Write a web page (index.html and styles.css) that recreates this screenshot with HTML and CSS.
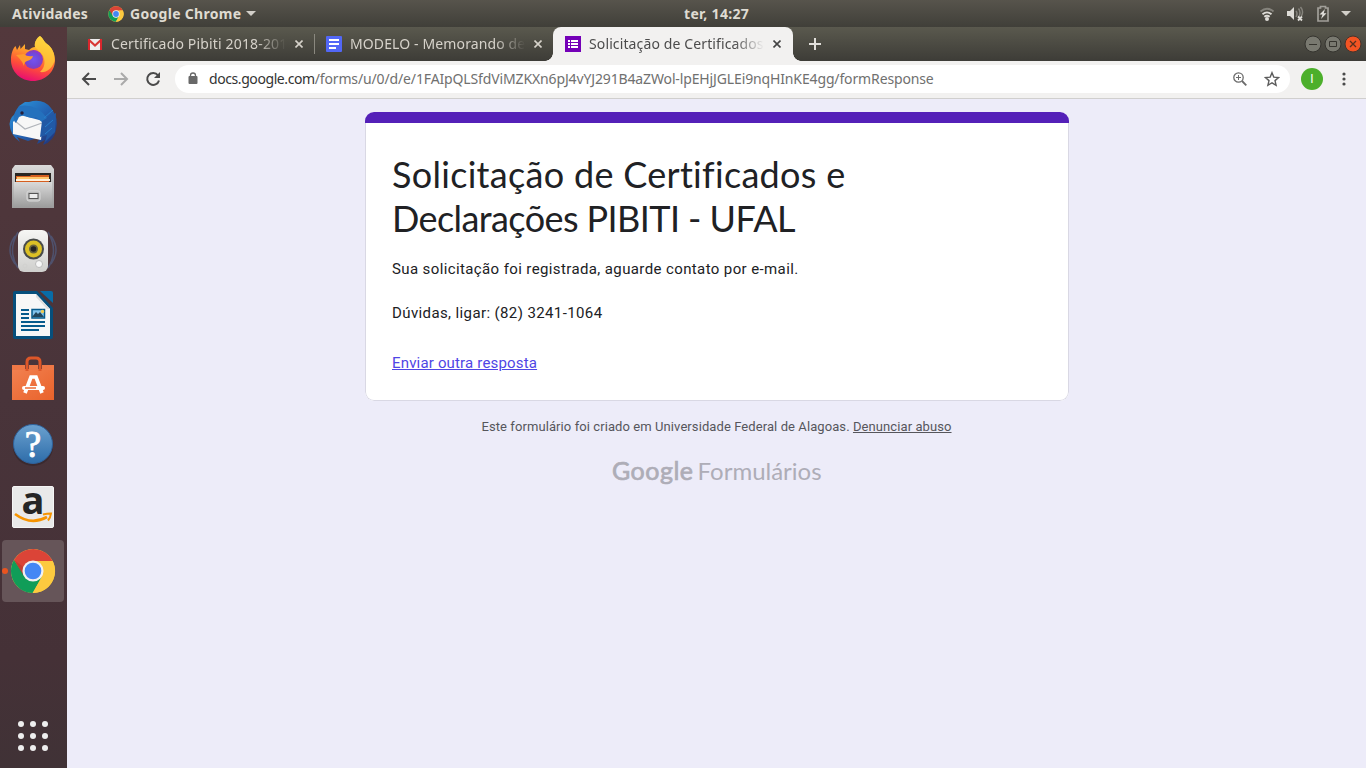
FILE: index.html
```html
<!DOCTYPE html>
<html lang="pt-BR">
<head>
<meta charset="utf-8">
<title>Solicitação de Certificados e Declarações PIBITI - UFAL</title>
<link rel="stylesheet" href="styles.css">
</head>
<body>
<svg class="defs" width="0" height="0">
  <defs>
    <linearGradient id="ffBody" x1=".7" y1="0" x2=".4" y2="1"><stop offset="0" stop-color="#fff04a"/><stop offset=".35" stop-color="#ffa42b"/><stop offset=".68" stop-color="#ff5038"/><stop offset="1" stop-color="#e80d72"/></linearGradient>
    <radialGradient id="ffGlobe"><stop offset="0" stop-color="#7752ef"/><stop offset=".6" stop-color="#7049dc"/><stop offset="1" stop-color="#8d3bb6"/></radialGradient>
    <linearGradient id="tb" x1="0" y1="0" x2="1" y2="1"><stop offset="0" stop-color="#2d9be0"/><stop offset=".5" stop-color="#2364b4"/><stop offset="1" stop-color="#222e70"/></linearGradient>
    <linearGradient id="metal" x1="0" y1="0" x2="0" y2="1"><stop offset="0" stop-color="#dadada"/><stop offset="1" stop-color="#9c9c9c"/></linearGradient>
    <linearGradient id="white" x1="0" y1="0" x2="0" y2="1"><stop offset="0" stop-color="#f6f6f4"/><stop offset="1" stop-color="#cfcfcd"/></linearGradient>
    <linearGradient id="bag" x1="0" y1="0" x2="1" y2="1"><stop offset="0" stop-color="#f28150"/><stop offset="1" stop-color="#e9622b"/></linearGradient>
    <linearGradient id="help" x1="0" y1="0" x2="0" y2="1"><stop offset="0" stop-color="#6ba1cf"/><stop offset="1" stop-color="#2d6ca9"/></linearGradient>
    <symbol id="chrome" viewBox="0 0 48 48">
      <circle cx="24" cy="24" r="23" fill="#fcca3f"/>
      <path d="M24 13.500H44.500A23 23 0 0 0 4.100 12.500L14 29Z" fill="#db4437"/>
      <path d="M4.100 12.500A23 23 0 0 0 23.500 47L33 30.500 24 34.500 15 29.500Z" fill="#109d58"/>
      <path d="M24 47 33.500 29.500 34 13.500H44.500A23 23 0 0 1 24 47Z" fill="#fcca3f"/>
      <path d="M4.100 12.500 14 29.500 14.500 20Z" fill="#8f2f20" opacity=".3"/>
      <circle cx="24" cy="24" r="11" fill="#f1f1f1"/><circle cx="24" cy="24" r="8.700" fill="#4487f4"/>
    </symbol>
  </defs>
</svg>
<div class="desktop">
  <header class="topbar">
    <span class="activities">Atividades</span>
    <svg class="app-icon" width="16" height="16"><use href="#chrome"/></svg>
    <span class="app-name">Google Chrome</span>
    <svg class="app-caret" width="10" height="5"><path d="M0 0h10L5 5Z" fill="#d2cfc9"/></svg>
    <span class="clock">ter, 14:27</span>
    <div class="tray">
      <svg width="16" height="16" fill="none" stroke-width="1.800"><path d="M1.500 5.500Q8 0 14.500 5.500" stroke="#85837c"/><path d="M3.500 8.200Q8 4.500 12.500 8.200M5.300 10.800Q8 8.600 10.700 10.800" stroke="#dedcd7"/><circle cx="8" cy="13" r="2" fill="#dedcd7"/></svg>
      <svg width="18" height="16"><path d="M1 5h3l4-4v13l-4-4H1Z" fill="#dedcd7"/><path d="M10 5q2 2.500 0 6M12.500 2.500q3 4 0 9M14.500 1q3.500 4 1 9" fill="none" stroke="#85837c" stroke-width="1.500"/><path d="m12 10.500 4 4m0-4-4 4" stroke="#dedcd7" stroke-width="1.800"/></svg>
      <svg width="14" height="18"><path d="M4.500 3V1.500h5V3H12v13H2V3Z" fill="none" stroke="#a19f99" stroke-width="1.700"/><path d="M9 4 3.500 9.500h3L5 14l5.500-5.800H7.700Z" fill="#e2e0dc"/></svg>
      <svg width="10" height="5"><path d="M0 0h10L5 5Z" fill="#d2cfc9"/></svg>
    </div>
  </header>
  <div class="workspace">
    <nav class="dock">
      <div class="dock-item"><svg width="48" height="48" viewBox="0 0 48 48">
        <path d="M31 1C34 3 35 7 38 9 43 12 46 19 46 25 46 37 36 46 24 46S1.500 37 2 24C2 19 4 13 6.500 11L8 15 11 10 11.500 14 16 9V14L20 15C22 13 24 12 26 12 25 7 28 3 31 1Z" fill="url(#ffBody)"/>
        <path d="M31 1C34 3 35 7 38 9 43 12 46 19 45.500 26 43 34 37 38 31 37 38 31 36 21 31 17L26 12C25 7 28 3 31 1Z" fill="#ffcf3b" opacity=".75"/>
        <circle cx="24.500" cy="24.500" r="9.500" fill="url(#ffGlobe)"/>
        <path d="M7 20 15 19Q18 22 24 21 23 25 18 26 15 27 15 31 13 26 10 23Z" fill="#ff9b2d"/><path d="M24 15q7 1 9 7-4-4-9-7Z" fill="#9137cf"/>
      </svg></div>
      <div class="dock-item"><svg width="48" height="48" viewBox="0 0 48 48">
        <path d="M10 7 16 3 20 3Q34-1 42 9 50 19 47 31 45 42 34 46L36 41 28 45 31 38 19 42 8 38 11 43Q1 36 .5 25 1 17 9 13Z" fill="url(#tb)"/>
        <path d="m4 23 7-7 23 6-2 19L4 35Z" fill="#f7f7f7"/><path d="M6 22 16 30 33 24" fill="none" stroke="#b0b4ba" stroke-width="1.200"/>
        <path d="M10 7Q27 4 38 19L34 24 27 18Q20 20 15 16L10 18 7 24Q1 19 10 7Z" fill="#2471bd"/><path d="M33 22 47 14 46 33 36 43 38 36 31 38Z" fill="#2159a5"/><path d="m35 19 9-8m-8 17 8-7m-8 14 7-6" stroke="#267ecb"/><circle cx="13" cy="14" r="1.700" fill="#251f3a"/>
      </svg></div>
      <div class="dock-item"><svg width="48" height="48" viewBox="0 0 48 48">
        <path d="M6 2h36l3 4v39H3V6Z" fill="url(#metal)"/><path d="M6 10h36v9H6Z" fill="#292522"/><path d="M7 13h14l1-1h18v8H7Z" fill="#d55e20"/><path d="M8 14h32v2H8Z" fill="#ffc56a"/><path d="M7 16h34v2H7Z" fill="#fff0dc"/><path d="M5 19h38v25H5Z" fill="url(#metal)"/><rect x="18" y="28" width="13" height="10" rx="2" fill="#bababa" stroke="#dadada"/><rect x="20" y="30.500" width="9" height="5" fill="#ececec" stroke="#555"/>
      </svg></div>
      <div class="dock-item"><svg width="48" height="48" viewBox="0 0 48 48">
        <g fill="none" stroke="#527ab6" stroke-width="1.500" opacity=".4"><path d="M6 9Q-4 23 6 37M9 5Q-2 24 9 41M42 9q10 14 0 28M39 5q11 19 0 36"/></g>
        <rect x="9" y="3" width="30" height="42" rx="6" fill="url(#white)"/><circle cx="24.500" cy="22" r="10.500" fill="#484b4a"/><circle cx="24.500" cy="22" r="8.500" fill="#dbc025"/><circle cx="24.500" cy="22" r="4.500" fill="#68643e"/><circle cx="24.500" cy="22" r="2.800" fill="#222"/><circle cx="30" cy="37" r="3.500" fill="#f7f7f7" stroke="#bbb"/><circle cx="16" cy="39" r="2" fill="none" stroke="#d1d1cf"/>
      </svg></div>
      <div class="dock-item"><svg width="48" height="48" viewBox="0 0 48 48">
        <path d="M6 0h22L44 17v29q0 2-2 2H6q-2 0-2-2V2q0-2 2-2Z" fill="#064f7c"/><path d="M31 0h11q2 0 2 2v10Z" fill="#086ca7"/><path d="M7 3h20l14 15v27H7Z" fill="#f7f7f7"/><path d="M27 3v3l11 12h3Z" fill="#dedede"/><path d="M12 19h8m-8 4h8m-8 4h8m-8 4h24m-24 4h24m-24 4h18" stroke="#075b8c" stroke-width="2"/><rect x="23" y="18.500" width="12.500" height="8.500" fill="#83c3ec" stroke="#075b8c" stroke-width="1.500"/><path d="m23 26 4-5 2 2 2-2 4 5Z" fill="#24465c"/><circle cx="33.500" cy="20.500" r="1.700" fill="#f3cb4e"/>
      </svg></div>
      <div class="dock-item"><svg width="48" height="48" viewBox="0 0 48 48">
        <path d="M3 14h42v31H3Z" fill="url(#bag)"/><path d="M18 16V7q0-4 4-4h5q4 0 4 4v9" fill="none" stroke="#dd5729" stroke-width="3"/><path d="m16 38 6-16h5l6 16" fill="none" stroke="#fff" stroke-width="3.700"/><path d="M15 33h19" stroke="#fff" stroke-width="4" stroke-linecap="round"/><path d="M16 33h11" stroke="#ec6e39" stroke-width="1.500"/><path d="M3 10h13v5H3Zm17 0h9v5h-9Zm13 0h12v5H33Z" fill="#ef7846"/>
      </svg></div>
      <div class="dock-item"><svg width="48" height="48" viewBox="0 0 48 48">
        <ellipse cx="24" cy="28" rx="20" ry="19" opacity=".18"/><circle cx="24" cy="25" r="19.500" fill="url(#help)" stroke="#2f629b"/><text x="24" y="38" text-anchor="middle" class="question">?</text>
      </svg></div>
      <div class="dock-item"><svg width="48" height="48" viewBox="0 0 48 48">
        <rect x="3.500" y="3.500" width="41" height="41" rx="1.500" fill="#e9e9e9" stroke="#f5f5f5"/><text x="24" y="31" text-anchor="middle" class="amazon-letter">a</text><path d="M6 31Q22 43 38 34" fill="none" stroke="#f79400" stroke-width="2.700"/><path d="M34 31.500q4-1 8-1-.500 4-3 7" fill="none" stroke="#f79400" stroke-width="2"/>
      </svg></div>
      <div class="dock-item active"><svg width="46" height="46"><use href="#chrome"/></svg><i class="running"></i></div>
      <div class="apps"><i></i><i></i><i></i><i></i><i></i><i></i><i></i><i></i><i></i></div>
    </nav>
    <main class="browser">
      <div class="tabs">
        <div class="tab">
          <svg width="16" height="16"><path d="M1 3h14v11H1Z" fill="#eee"/><path d="m1.500 3.500 6.500 6 6.500-6" fill="none" stroke="#d83835" stroke-width="2.200"/><path d="M2 3v11M14 3v11" stroke="#d9272d" stroke-width="2"/></svg>
          <span class="tab-title t1">Certificado Pibiti 2018-201</span><svg class="close" width="8" height="8"><path d="m.5.5 7 7m0-7-7 7"/></svg>
        </div>
        <div class="tab second">
          <svg width="16" height="16"><rect width="16" height="16" rx="1" fill="#5267f6"/><path d="M3 4h10M3 8h10M3 12h7" stroke="#fff" stroke-width="1.800"/></svg>
          <span class="tab-title t2">MODELO - Memorando de</span><svg class="close" width="8" height="8"><path d="m.5.5 7 7m0-7-7 7"/></svg>
        </div>
        <div class="tab selected">
          <svg width="16" height="16"><path d="M0 0h16v16H0Z" fill="#7400b7"/><path d="M3 5h2m1 0h7M3 8h2m1 0h7M3 11h2m1 0h7" stroke="#fff" stroke-width="2"/></svg>
          <span class="tab-title t3">Solicitação de Certificados</span><svg class="close" width="8" height="8"><path d="m.5.5 7 7m0-7-7 7"/></svg>
        </div>
        <svg class="new-tab" width="12" height="12"><path d="M6 0v12M0 6h12" stroke="#e1dfda" stroke-width="2"/></svg>
        <div class="window-controls">
          <svg width="18" height="18"><circle cx="9" cy="9" r="8" fill="#797970" stroke="#35342f"/><path d="M5 9.500h8" stroke="#36352f"/></svg>
          <svg width="18" height="18"><circle cx="9" cy="9" r="8" fill="#797970" stroke="#35342f"/><path d="M5.500 6.500h7v5h-7Z" fill="none" stroke="#36352f"/></svg>
          <svg width="18" height="18"><circle cx="9" cy="9" r="8" fill="#f35423" stroke="#45332c"/><path d="m6 6 6 6m0-6-6 6" stroke="#57301e" stroke-width="1.300"/></svg>
        </div>
      </div>
      <div class="toolbar">
        <svg width="16" height="16"><path d="M15 8H2m6-6L2 8l6 6" fill="none" stroke="#4a4a4a" stroke-width="2"/></svg>
        <svg width="16" height="16"><path d="M1 8h13M8 2l6 6-6 6" fill="none" stroke="#aaa" stroke-width="2"/></svg>
        <svg width="16" height="16"><path d="M13 4.300A6 6 0 1 0 14 9.500" fill="none" stroke="#4a4a4a" stroke-width="2"/><path d="M15 1v6H9Z" fill="#4a4a4a"/></svg>
        <div class="address">
          <svg width="10" height="13"><rect x=".5" y="4" width="9" height="8" rx="1" fill="#686868"/><path d="M2.500 5V3.500a2.500 2.500 0 0 1 5 0V5" fill="none" stroke="#686868" stroke-width="1.300"/></svg>
          <span class="url"><b>docs.google.com</b>/forms/u/0/d/e/1FAIpQLSfdViMZKXn6pJ4vYJ291B4aZWol-lpEHjJGLEi9nqHInKE4gg/formResponse</span>
          <svg width="14" height="14" fill="none" stroke="#6b6b6b"><circle cx="5.500" cy="5.500" r="4.700" stroke-width="1.300"/><path d="m9 9 4.300 4.300" stroke-width="1.800"/><path d="M3 5.500h5M5.500 3v5"/></svg>
          <svg width="16" height="16"><path d="m8 1.700 1.800 4.400 4.800.4L11 9.600l1.100 4.700L8 11.800l-4.100 2.500L5 9.600 1.400 6.500l4.800-.4Z" fill="none" stroke="#5c5c5c" stroke-width="1.400"/></svg>
        </div>
        <span class="avatar">I</span>
        <svg class="menu" width="4" height="14" fill="#4a4a4a"><circle cx="2" cy="2" r="1.600"/><circle cx="2" cy="7" r="1.600"/><circle cx="2" cy="12" r="1.600"/></svg>
      </div>
      <div class="page">
        <section class="card">
          <div class="accent"></div>
          <div class="card-body">
            <h1><span class="line1">Solicitação de Certificados e</span><br><span class="line2">Declarações PIBITI - UFAL</span></h1>
            <p>Sua solicitação foi registrada, aguarde contato por e-mail.<br><br>Dúvidas, ligar: (82) 3241-1064</p>
            <a class="again" href="#">Enviar outra resposta</a>
          </div>
        </section>
        <footer>
          <div class="legal">Este formulário foi criado em Universidade Federal de Alagoas. <a href="#">Denunciar abuso</a></div>
          <div class="brand"><b>Google</b><span>Formulários</span></div>
        </footer>
      </div>
    </main>
  </div>
</div>
</body>
</html>
```
FILE: styles.css
```css
* { box-sizing: border-box; }
body { margin: 0; overflow: hidden; font-family: Roboto, "Liberation Sans", sans-serif; }
svg { display: block; flex: none; }
.defs { position: absolute; }
.desktop { width: 1366px; height: 768px; display: flex; flex-direction: column; }
.topbar { position: relative; height: 27px; flex: none; display: flex; align-items: center; padding-left: 12px; background: linear-gradient(#57544c, #403f39); color: #dfdbd2; font: bold 14px/27px "Noto Sans", "Open Sans", sans-serif; white-space: nowrap; }
.activities { width: 96px; letter-spacing: .25px; }
.app-name { margin-left: 6px; width: 113px; letter-spacing: .3px; }
.app-caret { margin-left: 3px; }
.clock { position: absolute; left: 684px; letter-spacing: .3px; }
.tray { margin-left: auto; display: flex; align-items: center; padding-right: 15px; }
.tray svg:nth-child(2) { margin-left: 11px; }
.tray svg:nth-child(3) { margin-left: 12px; }
.tray svg:nth-child(4) { margin-left: 11px; }
.workspace { flex: 1; min-height: 0; display: flex; }
.dock { width: 67px; flex: none; display: flex; flex-direction: column; gap: 2px; padding: 1px 3px 0 2px; background: linear-gradient(#53383c, #49343a 50%, #453137 85%, #403236); }
.dock-item { position: relative; width: 62px; height: 62px; display: flex; align-items: center; justify-content: center; }
.active { background: #665559; border-radius: 4px; }
.running { position: absolute; left: 0; top: 28px; width: 6px; height: 6px; border-radius: 50%; background: #e95420; }
.question { font: 37px "Liberation Serif", serif; fill: #fff; stroke: #fff; stroke-width: .9px; }
.amazon-letter { font: bold 38px "Open Sans", sans-serif; fill: #252525; }
.dock-item svg { overflow: visible; }
.apps { margin: auto auto 17px 16px; display: grid; grid-template-columns: repeat(3, 6px); gap: 6px; }
.apps i { width: 6px; height: 6px; border-radius: 50%; background: #eee; }
.browser { flex: 1; min-width: 0; display: flex; flex-direction: column; background: #edecf9; }
.tabs { height: 34px; flex: none; display: flex; align-items: center; padding-left: 8px; background: linear-gradient(#5a594e, #3d3c37); }
.tab { width: 239px; height: 34px; display: flex; align-items: center; padding-left: 12px; color: #d6d2ca; font: 14px/20px "Noto Sans", "Open Sans", sans-serif; }
.second { background: linear-gradient(#8a887f, #8a887f) 0 50% / 1px 20px no-repeat; }
.tab-title { margin-left: 8px; width: 177px; overflow: hidden; white-space: nowrap; -webkit-mask-image: linear-gradient(90deg, #000 82%, transparent 99%); mask-image: linear-gradient(90deg, #000 82%, transparent 99%); }
.t1 { letter-spacing: .16px; }
.t2, .t3 { letter-spacing: .12px; }
.close { margin-left: 7px; stroke: #d6d2ca; stroke-width: 1.6; }
.selected { position: relative; width: 240px; background: #f2f1f0; border-radius: 8px 8px 0 0; color: #4c4c4c; }
.selected::before, .selected::after { content: ""; position: absolute; bottom: 0; width: 8px; height: 8px; }
.selected::before { left: -8px; background: radial-gradient(circle at 0 0, transparent 7.5px, #f2f1f0 8px); }
.selected::after { right: -8px; background: radial-gradient(circle at 100% 0, transparent 7.5px, #f2f1f0 8px); }
.selected .close { stroke: #444; }
.new-tab { margin-left: 16px; }
.window-controls { margin-left: auto; display: flex; gap: 2px; padding-right: 4px; }
.toolbar { height: 38px; flex: none; display: flex; align-items: center; padding: 0 20px 2px 14px; background: #f2f1f0; border-bottom: 1px solid #d0cfce; }
.toolbar > svg + svg { margin-left: 16px; }
.address { margin-left: 14px; width: 1115px; height: 28px; display: flex; align-items: center; border-radius: 14px; background: #fff; padding: 0 10px 0 13px; }
.url { margin: 0 auto 0 11px; font: 14px/20px "Noto Sans", "Open Sans", sans-serif; color: #70706f; white-space: nowrap; letter-spacing: -.135px; }
.url b { font-weight: 400; color: #333; letter-spacing: -.42px; }
.address svg:last-child { margin-left: 17px; }
.avatar { margin-left: 11px; width: 22px; height: 22px; border-radius: 50%; background: #4caf2b; color: #fff; font-size: 12px; line-height: 22px; text-align: center; }
.toolbar .menu { margin-left: auto; }
.page { flex: 1; padding: 13px 0 0 298px; }
.card { width: 704px; height: 289px; display: flex; flex-direction: column; border-radius: 9px; overflow: hidden; background: #fff; color: #202124; }
.accent { height: 11px; flex: none; background: #5420b8; }
.card-body { flex: 1; padding: 30px 26px 0; border: 1px solid #d9d8e4; border-top: 0; border-radius: 0 0 9px 9px; }
h1 { margin: -1px 0 0; font: 400 36px/44px Lato, sans-serif; white-space: nowrap; }
.line1 { letter-spacing: .3px; }
.line2 { letter-spacing: -.58px; }
.card p { margin: 18px 0 0; font-size: 15px; line-height: 22px; letter-spacing: .385px; white-space: nowrap; }
.again { display: block; margin-top: 28px; font-size: 15px; line-height: 22px; letter-spacing: .17px; color: #4f46e5; text-decoration: underline; }
footer { width: 704px; color: #56565c; }
.legal { margin-top: 17px; padding-right: 1px; font-size: 13px; line-height: 18px; letter-spacing: .085px; text-align: center; white-space: nowrap; }
.legal a { color: inherit; }
.brand { margin: 18px 0 0 247px; display: flex; align-items: baseline; gap: 4px; color: #aeadb7; font: 24px/32px Lato, sans-serif; }
.brand b { font-weight: 400; font-size: 25px; letter-spacing: .5px; -webkit-text-stroke: .7px #aeadb7; }
```
